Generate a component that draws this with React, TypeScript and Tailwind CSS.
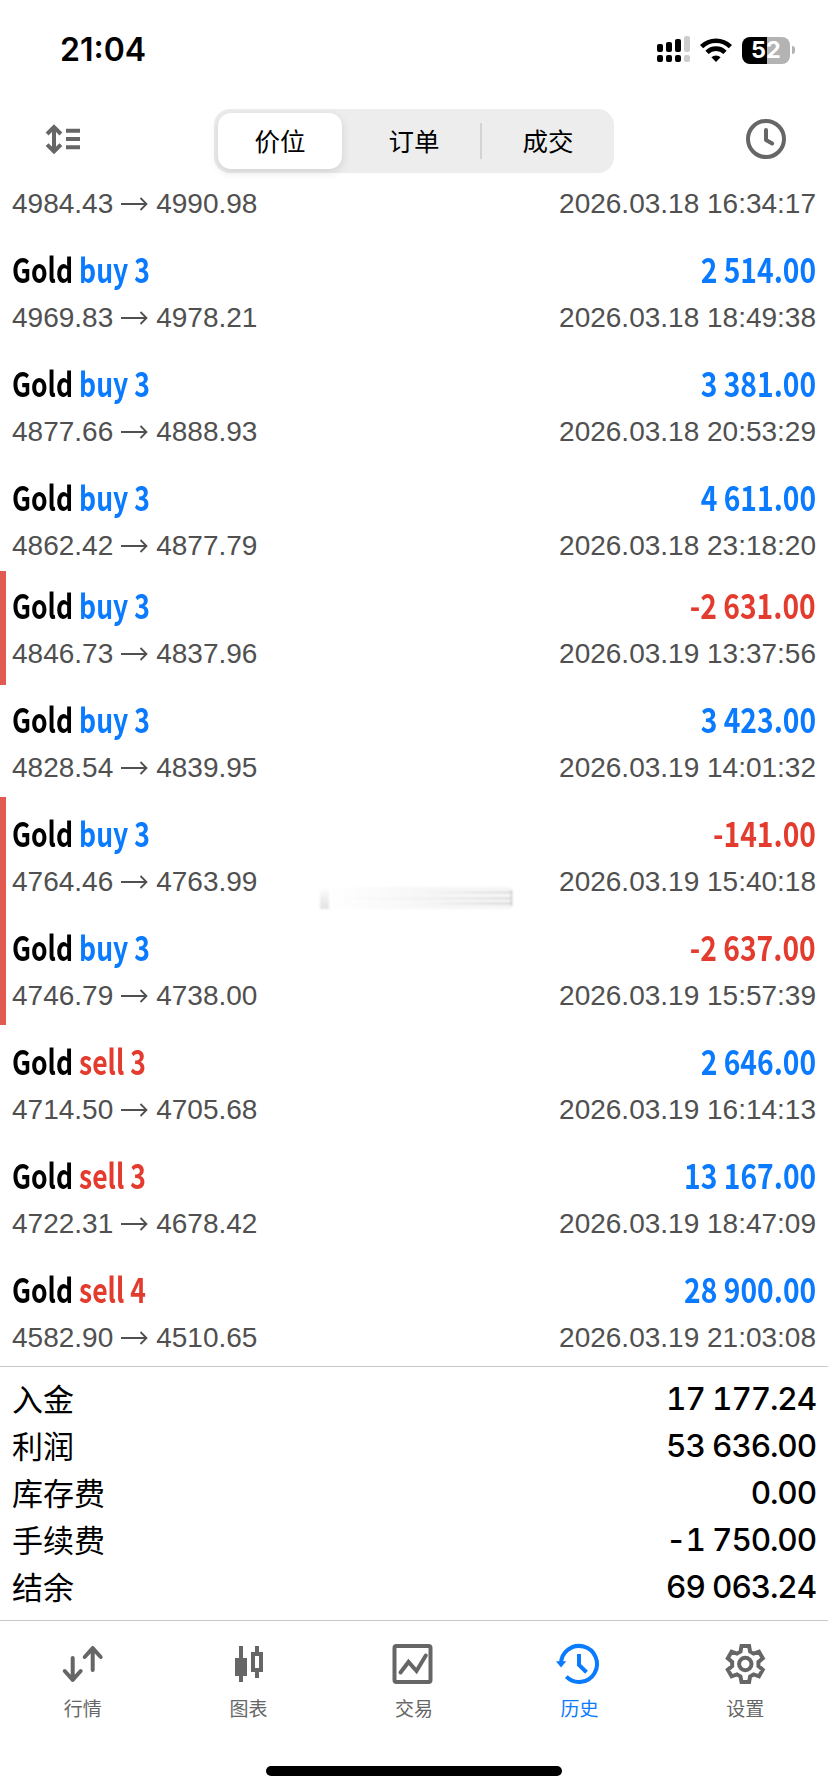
import type { ReactNode } from 'react';

type Deal = {
  side: 'buy' | 'sell';
  volume: number;
  open: string;
  close: string;
  profit: string;
  time: string;
};

const deals: Deal[] = [
  { side: 'buy', volume: 3, open: '4969.83', close: '4978.21', profit: '2 514.00', time: '2026.03.18 18:49:38' },
  { side: 'buy', volume: 3, open: '4877.66', close: '4888.93', profit: '3 381.00', time: '2026.03.18 20:53:29' },
  { side: 'buy', volume: 3, open: '4862.42', close: '4877.79', profit: '4 611.00', time: '2026.03.18 23:18:20' },
  { side: 'buy', volume: 3, open: '4846.73', close: '4837.96', profit: '-2 631.00', time: '2026.03.19 13:37:56' },
  { side: 'buy', volume: 3, open: '4828.54', close: '4839.95', profit: '3 423.00', time: '2026.03.19 14:01:32' },
  { side: 'buy', volume: 3, open: '4764.46', close: '4763.99', profit: '-141.00', time: '2026.03.19 15:40:18' },
  { side: 'buy', volume: 3, open: '4746.79', close: '4738.00', profit: '-2 637.00', time: '2026.03.19 15:57:39' },
  { side: 'sell', volume: 3, open: '4714.50', close: '4705.68', profit: '2 646.00', time: '2026.03.19 16:14:13' },
  { side: 'sell', volume: 3, open: '4722.31', close: '4678.42', profit: '13 167.00', time: '2026.03.19 18:47:09' },
  { side: 'sell', volume: 4, open: '4582.90', close: '4510.65', profit: '28 900.00', time: '2026.03.19 21:03:08' },
];

const totals = [
  { label: '入金', value: '17 177.24' },
  { label: '利润', value: '53 636.00' },
  { label: '库存费', value: '0.00' },
  { label: '手续费', value: '-1 750.00' },
  { label: '结余', value: '69 063.24' },
];

const StatusBar = () => (
  <div className="flex h-[100px] items-center justify-between pl-[60px] pr-[33px]">
    <span className="font-['Inter'] text-[32px] font-semibold leading-none">21:04</span>
    <div className="flex items-center">
      <svg width="34" height="28" viewBox="0 0 34 28" className="mb-[3px]">
        <g fill="#000">
          <rect x="0" y="9" width="6" height="8" rx="2" />
          <rect x="9" y="7" width="6" height="10" rx="2" />
          <rect x="18" y="4" width="6" height="13" rx="2" />
          <rect x="0" y="20" width="6" height="7" rx="2" />
          <rect x="9" y="20" width="6" height="7" rx="2" />
          <rect x="18" y="20" width="6" height="7" rx="2" />
        </g>
        <g fill="#cdcdcd">
          <rect x="27" y="1" width="6" height="16" rx="2" />
          <rect x="27" y="20" width="6" height="7" rx="2" />
        </g>
      </svg>
      <svg width="32" height="24" viewBox="0 0 32 24" className="ml-[9px] mb-px" fill="none" stroke="#000">
        <path d="M1.6 8.6 A20.5 20.5 0 0 1 30.4 8.6" strokeWidth="4.6" />
        <path d="M7 14.3 A12.8 12.8 0 0 1 25 14.3" strokeWidth="4.6" />
        <path d="M16 24 L11.4 19.3 A6.6 6.6 0 0 1 20.6 19.3 Z" fill="#000" stroke="none" />
      </svg>
      <div className="ml-[10px] flex h-[27px] w-[48px] items-center justify-center rounded-[8px] bg-linear-to-r from-black from-52% to-[#b3b3b3] to-52%">
        <span className="font-['Inter'] text-[23.5px] font-bold leading-none text-white">52</span>
      </div>
      <div className="ml-[2px] h-[8px] w-[3px] rounded-r-full bg-[#b3b3b3]" />
    </div>
  </div>
);

const Toolbar = () => (
  <div className="flex h-[78px] items-center px-[42px]">
    <svg width="36" height="32" viewBox="0 0 36 32" className="ml-[3px]" fill="none" stroke="#666" strokeWidth="4">
      <path d="M9 4.500V28M2.100 11 9 4.100l6.900 6.900M2.100 21.600 9 28.500l6.900-6.900" />
      <path d="M21 7.700h14M21 16h14M21 24.300h14" />
    </svg>
    <div className="ml-[133px] mt-1 flex h-[64px] w-[400px] rounded-[16px] bg-[#ededed] p-1 font-['Noto_Sans_CJK_SC',sans-serif] text-[25.5px] leading-none">
      <div className="flex w-[124px] items-center justify-center rounded-[13px] bg-white pb-[2px] shadow-[0_3px_10px_rgba(0,0,0,0.12)]">价位</div>
      <div className="flex w-[138px] items-center justify-center pb-[2px] pl-[6px]">订单</div>
      <div className="h-9 w-[2px] self-center bg-[#d3d3d3]" />
      <div className="flex flex-1 items-center justify-center pb-[2px] pl-[4px]">成交</div>
    </div>
    <svg width="40" height="40" viewBox="0 0 40 40" className="ml-auto" fill="none" stroke="#666" strokeWidth="4">
      <circle cx="20" cy="20" r="18" />
      <path d="M20 11v10l6.200 3.500" strokeLinecap="round" strokeLinejoin="round" />
    </svg>
  </div>
);

const PriceLine = ({ open, close, time }: { open: string; close: string; time: string }) => (
  <div className="flex h-8 items-center justify-between font-['Liberation_Sans',sans-serif] text-[28px] leading-none text-[#505050]">
    <span className="flex items-center">
      {open}
      <svg width="27" height="16" viewBox="0 0 27 16" className="mx-2" fill="none" stroke="#505050" strokeWidth="1.800">
        <path d="M0 8h25.500M19.500 2l6 6-6 6" />
      </svg>
      {close}
    </span>
    <span>{time}</span>
  </div>
);

const DealRow = ({ deal, barClass = 'top-0' }: { deal: Deal; barClass?: string }) => {
  const isLoss = deal.profit.startsWith('-');
  return (
    <div className="relative h-[114px] shrink-0 px-[12px] pt-[13px]">
      {isLoss && <div className={`absolute left-0 h-[114px] w-[6px] bg-[#e15b50] ${barClass}`} />}
      <div className="flex h-[46px] items-center justify-between font-['Noto_Sans_CJK_SC',sans-serif] text-[34px] font-bold leading-none">
        <span className="origin-left scale-x-[0.78] whitespace-nowrap">
          Gold <span className={deal.side === 'buy' ? 'text-[#0a7aff]' : 'text-[#e33b2e]'}>{deal.side} {deal.volume}</span>
        </span>
        <span className={`origin-right scale-x-[0.83] whitespace-nowrap ${isLoss ? 'text-[#e33b2e]' : 'text-[#0a7aff]'}`}>{deal.profit}</span>
      </div>
      <div className="mt-[10px]">
        <PriceLine open={deal.open} close={deal.close} time={deal.time} />
      </div>
    </div>
  );
};

const Totals = () => (
  <div className="h-[254px] border-t border-[#c8c8c8] px-[12px] pt-[8px]">
    {totals.map((t) => (
      <div key={t.label} className="flex h-[47px] items-center justify-between">
        <span className="mb-[3px] font-['Noto_Sans_CJK_SC',sans-serif] text-[31px] leading-none">{t.label}</span>
        <span className="font-['Inter'] text-[31.5px] font-medium leading-none tabular-nums tracking-[-1.1px]">{t.value}</span>
      </div>
    ))}
  </div>
);

const tabs: { label: string; active?: boolean; icon: ReactNode }[] = [
  {
    label: '行情',
    icon: <path d="M12.700 15v22M4.700 28l8 8.800 8-8.800M32.700 27V5M24.700 14l8-8.800 8 8.800" strokeLinecap="round" strokeLinejoin="round" />,
  },
  {
    label: '图表',
    icon: (
      <>
        <path d="M15 3v36M31 3v32" />
        <path d="M9 15h12v18H9z" fill="currentColor" stroke="none" />
        <path d="M27 11h8v16h-8z" fill="#fff" />
      </>
    ),
  },
  {
    label: '交易',
    icon: (
      <>
        <rect x="3.500" y="3" width="36" height="36" rx="2" />
        <path d="m9.500 29.500 8-10.500 8 9 9.300-15.500" strokeLinecap="round" />
      </>
    ),
  },
  {
    label: '历史',
    active: true,
    icon: (
      <>
        <path d="M4 21A18 18 0 1 1 9.300 33.700" />
        <path d="M22 11v11l7.500 7.200" />
        <path d="M-1 18.300H9.300L4 24.500z" fill="currentColor" stroke="none" />
      </>
    ),
  },
  {
    label: '设置',
    icon: (
      <g transform="translate(22.3 21)">
        <circle r="6.200" />
        <path d="M-3.8-18H3.800L4.800-12.400 8.340-10.360 13.690-12.290 17.490-5.710 13.140-2.040V2.040L17.490 5.710 13.690 12.290 8.340 10.360 4.800 12.400 3.800 18H-3.800L-4.800 12.400-8.340 10.360-13.690 12.290-17.490 5.710-13.140 2.040V-2.040L-17.490-5.710-13.690-12.290-8.340-10.360-4.800-12.400z" />
      </g>
    ),
  },
];

const TabBar = () => (
  <div className="flex h-[128px] border-t border-[#c8c8c8] pt-[22px]">
    {tabs.map((tab) => (
      <div key={tab.label} className={`flex flex-1 flex-col items-center ${tab.active ? 'text-[#0a7aff]' : 'text-[#666]'}`}>
        <svg width="45" height="42" viewBox="0 0 45 42" className="overflow-visible" fill="none" stroke="currentColor" strokeWidth="4">
          {tab.icon}
        </svg>
        <span className="mt-[13px] font-['Noto_Sans_CJK_SC',sans-serif] text-[19px] leading-none">{tab.label}</span>
      </div>
    ))}
  </div>
);

export default function App() {
  return (
    <div className="flex h-[1792px] w-[828px] flex-col overflow-hidden bg-white text-black">
      <StatusBar />
      <Toolbar />
      <div className="relative flex h-[1188px] flex-col">
        <div className="h-[55px] shrink-0 px-[12px] pt-[10px]">
          <PriceLine open="4984.43" close="4990.98" time="2026.03.18 16:34:17" />
        </div>
        {deals.slice(0, 3).map((d) => <DealRow key={d.time} deal={d} />)}
        <div className="-mt-[6px]">
          {deals.slice(3).map((d, i) => <DealRow key={d.time} deal={d} barClass={i === 0 ? 'top-[2px]' : 'top-0'} />)}
        </div>
        {/* faint smudge left over the list */}
        <div className="absolute left-[320px] top-[709px] flex h-[22px] w-[192px] items-stretch blur-[1px]">
          <div className="w-[9px] bg-linear-to-b from-white to-[#e2e2e2]" />
          <div className="flex flex-1 flex-col justify-evenly bg-linear-to-r from-white via-[#f7f7f7] to-[#f5f5f5]">
            <div className="h-px bg-linear-to-r from-transparent via-transparent to-[#c4c4c4]" />
            <div className="h-px bg-linear-to-r from-transparent via-[#ebebeb] to-[#c4c4c4]" />
            <div className="h-px bg-linear-to-r from-transparent via-transparent to-[#b8b8b8]" />
          </div>
          <div className="my-[3px] w-px bg-[#b4b4b4]" />
        </div>
      </div>
      <Totals />
      <TabBar />
      <div className="mx-auto mt-[18px] h-[10px] w-[296px] rounded-full bg-black" />
    </div>
  );
}
